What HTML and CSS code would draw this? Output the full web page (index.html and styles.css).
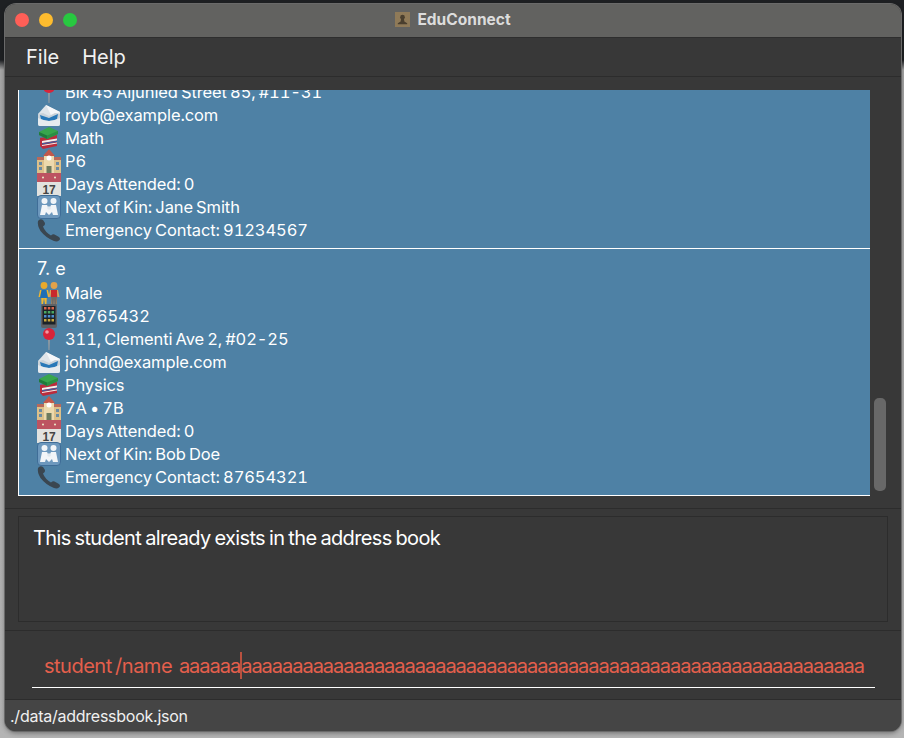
FILE: index.html
```html
<!DOCTYPE html>
<html lang="en">
<head>
    <meta charset="UTF-8">
    <meta name="viewport" content="width=device-width, initial-scale=1.0">
    <title>EduConnect</title>
    <link rel="stylesheet" href="styles.css">
</head>
<body>
    <svg class="icon-defs" width="0" height="0">
        <defs>
            <symbol id="i-pin" viewBox="0 0 24 24">
                <path d="M11.200 10h1.600l-.4 13h-.8z" fill="#a9a3a0"/>
                <circle cx="12" cy="7" r="6" fill="#d8243a"/>
                <circle cx="10" cy="5" r="1.800" fill="#f29aa2"/>
            </symbol>
            <symbol id="i-mail" viewBox="0 0 24 24">
                <path d="M1 11L9 2l14 7v4L12 17z" fill="#dfe5ea"/>
                <path d="M9 2l14 7-9 3z" fill="#f5f7f9"/>
                <path d="M1 11l5-1 6 3 6-3 5 1v10q0 2-2 2H3q-2 0-2-2z" fill="#c9d2d9"/>
                <path d="M3 12l9 3 9-4-1 5q-8 4-16 0z" fill="#2878b8"/>
                <path d="M1 15q11 6 22 0v6q0 2-2 2H3q-2 0-2-2z" fill="#e6ebef"/>
            </symbol>
            <symbol id="i-books" viewBox="0 0 24 24">
                <path d="M3 12l17-3v11L6 23l-3-3z" fill="#bb2c3c"/>
                <path d="M5 15l15-2.500v2L5 17zM5 19l15-2.500v1L5 20z" fill="#f0f0ee"/>
                <path d="M5 17.300l15-2.500v1.200L5 18.500z" fill="#3d5f9f"/>
                <path d="M2 6l10-5 9 4v3L10 13 2 9z" fill="#38a64d"/>
                <path d="M2 6l8 3.500V13L2 9z" fill="#1f7a3c"/>
                <path d="M10 9.500L21 5v3L10 13z" fill="#2b8f44"/>
            </symbol>
            <symbol id="i-school" viewBox="0 0 24 24">
                <path d="M0 9h24v15H0z" fill="#dcc08a"/>
                <path d="M0 8h8v3H0zM16 8h8v3h-8z" fill="#b9695a"/>
                <path d="M7 6h10v18H7z" fill="#ecd9ad"/>
                <path d="M12 0l6 7H6z" fill="#c2584a"/>
                <circle cx="12" cy="9" r="2.500" fill="#fff"/>
                <path d="M9.500 17h5v7h-5z" fill="#6e7b5e"/>
                <path d="M2 13h3v3H2zM19 13h3v3h-3zM2 18h3v3H2zM19 18h3v3h-3z" fill="#6a8ba3"/>
            </symbol>
            <symbol id="i-cal" viewBox="0 0 24 24">
                <path d="M0 1h24v10H0z" fill="#bd5361"/>
                <path d="M0 10h24v14H0z" fill="#e2e2df"/>
                <circle cx="6" cy="5.500" r="1" fill="#eec"/><circle cx="18" cy="5.500" r="1" fill="#eec"/>
                <text x="12" y="22" font-size="12" font-weight="700" text-anchor="middle" font-family="Liberation Sans, sans-serif" fill="#444">17</text>
            </symbol>
            <symbol id="i-kin" viewBox="0 0 24 24">
                <rect x=".5" y=".5" width="23" height="23" rx="3.500" fill="#6d98bd" stroke="#3f6d97"/>
                <circle cx="7.500" cy="6" r="3" fill="#f2f5f8"/><circle cx="16.500" cy="6" r="3" fill="#f2f5f8"/>
                <path d="M3 20L5 10h5l2 4 2-4h5l2 10h-5l-1-3-3 3-3-3-1 3z" fill="#f2f5f8"/>
                <circle cx="12" cy="13" r="1.800" fill="#dfe7ee"/>
            </symbol>
            <symbol id="i-phone" viewBox="0 0 24 24">
                <path d="M1 3q2-3 5-1l2 3q.5 2-2 3.500Q8 14 14 17.500q2-2 3.500-1l4.500 2.500q2 2 0 3.500-2 1.500-5 .5Q9 20 3.500 13 0 7 1 3z" fill="#3a4650"/>
            </symbol>
            <symbol id="i-people" viewBox="0 0 24 24">
                <path d="M3 9h8l1.500 7h-2L10 12l-.5 11h-1.500l-1-6-1 6H4.500L4 12l-.5 4h-2z" fill="#efb62f"/>
                <path d="M4.500 9h5L11 17H3z" fill="#1f6fb5"/>
                <circle cx="7" cy="4.500" r="3.400" fill="#e9a92c"/>
                <path d="M13 9h8l1.500 7h-2L20 12v11h-2.500l-.5-6-.5 6H14V12l-.5 4h-2z" fill="#d9a25a"/>
                <path d="M14 9h6v7h-6z" fill="#c8282d"/>
                <path d="M14 16h6l-.5 8h-2l-.5-6-.5 6h-2z" fill="#6f6a66"/>
                <circle cx="17" cy="4.500" r="3.400" fill="#e2a24a"/>
            </symbol>
            <symbol id="i-mobile" viewBox="0 0 24 24">
                <rect x="4" y="0" width="16" height="24" rx="2" fill="#5e6165"/>
                <rect x="5.500" y="2" width="13" height="18.500" fill="#1c2228"/>
                <path d="M7 3h2.500v2.500H7zM10.800 3h2.500v2.500h-2.500zM14.500 3H17v2.500h-2.500z" fill="#d9644a"/>
                <path d="M7 7h2.500v2.500H7zM10.800 7h2.500v2.500h-2.500zM14.500 7H17v2.500h-2.500z" fill="#4aa863"/>
                <path d="M7 11h2.500v2.500H7zM10.800 11h2.500v2.500h-2.500zM14.500 11H17v2.500h-2.500z" fill="#4e8ed0"/>
                <path d="M7 15h2.500v2.500H7zM10.800 15h2.500v2.500h-2.500zM14.500 15H17v2.500h-2.500z" fill="#c9a83e"/>
            </symbol>
        </defs>
    </svg>

    <div class="window">
        <header class="titlebar">
            <div class="traffic-lights">
                <span class="light light-red"></span>
                <span class="light light-yellow"></span>
                <span class="light light-green"></span>
            </div>
            <div class="title">
                <svg class="title-icon" viewBox="0 0 16 16">
                    <rect width="16" height="16" fill="#8f7a58"/>
                    <circle cx="8" cy="5.500" r="2.500" fill="#4a3f2e"/>
                    <path d="M6.500 7h3l.5 3 3 2v1H3v-1l3-2z" fill="#4a3f2e"/>
                </svg>
                <span>EduConnect</span>
            </div>
        </header>

        <nav class="menubar">
            <span class="menu-item">File</span>
            <span class="menu-item">Help</span>
        </nav>

        <section class="list-panel">
            <div class="list">
                <div class="card">
                    <div class="row"><svg class="emoji"><use href="#i-pin"/></svg>Blk 45 Aljunied Street 85, #11-31</div>
                    <div class="row"><svg class="emoji"><use href="#i-mail"/></svg>royb@example.com</div>
                    <div class="row"><svg class="emoji"><use href="#i-books"/></svg>Math</div>
                    <div class="row"><svg class="emoji"><use href="#i-school"/></svg>P6</div>
                    <div class="row"><svg class="emoji"><use href="#i-cal"/></svg>Days Attended: 0</div>
                    <div class="row"><svg class="emoji"><use href="#i-kin"/></svg>Next of Kin: Jane Smith</div>
                    <div class="row"><svg class="emoji"><use href="#i-phone"/></svg>Emergency Contact: 91234567</div>
                </div>
                <div class="card">
                    <div class="card-name">7. e</div>
                    <div class="row"><svg class="emoji"><use href="#i-people"/></svg>Male</div>
                    <div class="row"><svg class="emoji"><use href="#i-mobile"/></svg>98765432</div>
                    <div class="row"><svg class="emoji"><use href="#i-pin"/></svg>311, Clementi Ave 2, #02-25</div>
                    <div class="row"><svg class="emoji"><use href="#i-mail"/></svg>johnd@example.com</div>
                    <div class="row"><svg class="emoji"><use href="#i-books"/></svg>Physics</div>
                    <div class="row"><svg class="emoji"><use href="#i-school"/></svg>7A • 7B</div>
                    <div class="row"><svg class="emoji"><use href="#i-cal"/></svg>Days Attended: 0</div>
                    <div class="row"><svg class="emoji"><use href="#i-kin"/></svg>Next of Kin: Bob Doe</div>
                    <div class="row"><svg class="emoji"><use href="#i-phone"/></svg>Emergency Contact: 87654321</div>
                </div>
            </div>
            <div class="scrollbar"></div>
        </section>

        <section class="result-panel">
            <div class="result-box">This student already exists in the address book</div>
        </section>

        <section class="command-panel">
            <div class="command-box">student /name&nbsp; <span class="command-arg">aaaaaa<span class="caret"></span>aaaaaaaaaaaaaaaaaaaaaaaaaaaaaaaaaaaaaaaaaaaaaaaaaaaaaaaaaaaaa</span></div>
        </section>

        <footer class="statusbar">./data/addressbook.json</footer>
    </div>
</body>
</html>
```

FILE: styles.css
```css
* {
    box-sizing: border-box;
}

html, body {
    height: 100%;
}

body {
    margin: 0;
    padding: 4px 3px 7px 5px;
    overflow: hidden;
    font-family: Inter, "Liberation Sans", sans-serif;
    background: linear-gradient(to bottom, #1e2023 0, #1e2023 60px, #a6a6a6 70px, #b4b4b4 100%);
}

.icon-defs {
    position: absolute;
}

.window {
    display: flex;
    flex-direction: column;
    height: 727px;
    border-radius: 11px;
    overflow: hidden;
    background-color: #383838;
    box-shadow: 0 0 0 1px #6a6a6a, 0 2px 5px rgba(0, 0, 0, 0.4);
    color: #fff;
}

.titlebar {
    display: flex;
    align-items: center;
    justify-content: center;
    flex: 0 0 34px;
    background-color: #626260;
    border-bottom: 1px solid #2e2e2e;
    position: relative;
}

.traffic-lights {
    position: absolute;
    left: 10px;
    top: 9px;
    display: flex;
    gap: 10px;
}

.light {
    width: 14px;
    height: 14px;
    border-radius: 50%;
}

.light-red {
    background-color: #ff5f57;
}

.light-yellow {
    background-color: #febc2e;
}

.light-green {
    background-color: #28c840;
}

.title {
    display: flex;
    align-items: center;
    gap: 7px;
    margin-top: -2px;
    font-size: 15.5px;
    font-weight: 700;
    color: #dcdcdc;
}

.title-icon {
    width: 15px;
    height: 15px;
}

.menubar {
    display: flex;
    align-items: center;
    gap: 23px;
    flex: 0 0 39px;
    padding: 0 0 0 21px;
    background-color: #383838;
    border-bottom: 1px solid #2c2c2c;
}

.menu-item {
    font-size: 20px;
    color: #f2f2f2;
}

.list-panel {
    display: flex;
    flex: 0 0 432px;
    padding: 13px 15px 12px 13px;
    gap: 4px;
    border-bottom: 1px solid #2c2c2c;
}

.list {
    display: flex;
    flex-direction: column;
    justify-content: flex-end;
    width: 852px;
    height: 406px;
    overflow: hidden;
    background-color: #4e81a5;
    border-left: 1px solid #fff;
    border-bottom: 1px solid #fff;
}

.card {
    flex: none;
    padding: 8px 0 6px 18px;
}

.card + .card {
    border-top: 1px solid #fff;
}

.card-name {
    font-size: 18px;
    line-height: 24px;
    margin-bottom: 1px;
}

.row {
    display: flex;
    align-items: center;
    gap: 4px;
    height: 23px;
    padding-bottom: 2px;
    font-size: 16.5px;
    font-feature-settings: "tnum";
    letter-spacing: -0.1px;
    word-spacing: -1.2px;
    white-space: nowrap;
}

.emoji {
    flex: none;
    width: 24px;
    height: 24px;
}

.scrollbar {
    align-self: flex-end;
    width: 12px;
    height: 93px;
    margin-bottom: 5px;
    border-radius: 5px;
    background-color: #686868;
}

.result-panel {
    flex: 0 0 122px;
    padding: 7px 13px 7px 13px;
    border-bottom: 1px solid #2c2c2c;
}

.result-box {
    height: 106px;
    padding: 7px 14px;
    border: 1px solid #2c2c2c;
    font-size: 20px;
    line-height: 28px;
    letter-spacing: -0.65px;
    word-spacing: -1px;
    color: #fff;
}

.command-panel {
    flex: 0 0 69px;
    padding: 20px 26px 0 27px;
    border-bottom: 1px solid #2c2c2c;
}

.command-box {
    height: 37px;
    padding: 1px 0 0 12px;
    overflow: hidden;
    border-bottom: 1px solid #fff;
    font-size: 20px;
    line-height: 28px;
    letter-spacing: -0.5px;
    word-spacing: -1.7px;
    white-space: nowrap;
    color: #e45f4c;
}

.command-arg {
    letter-spacing: -1.02px;
}

.caret {
    display: inline-block;
    width: 2px;
    height: 27px;
    margin-right: -1px;
    vertical-align: -6px;
    background-color: #b8513f;
}

.statusbar {
    flex: 1;
    padding: 6px 0 0 5px;
    background-color: #454545;
    font-size: 16px;
    letter-spacing: -0.25px;
    color: #f0f0f0;
}
```
